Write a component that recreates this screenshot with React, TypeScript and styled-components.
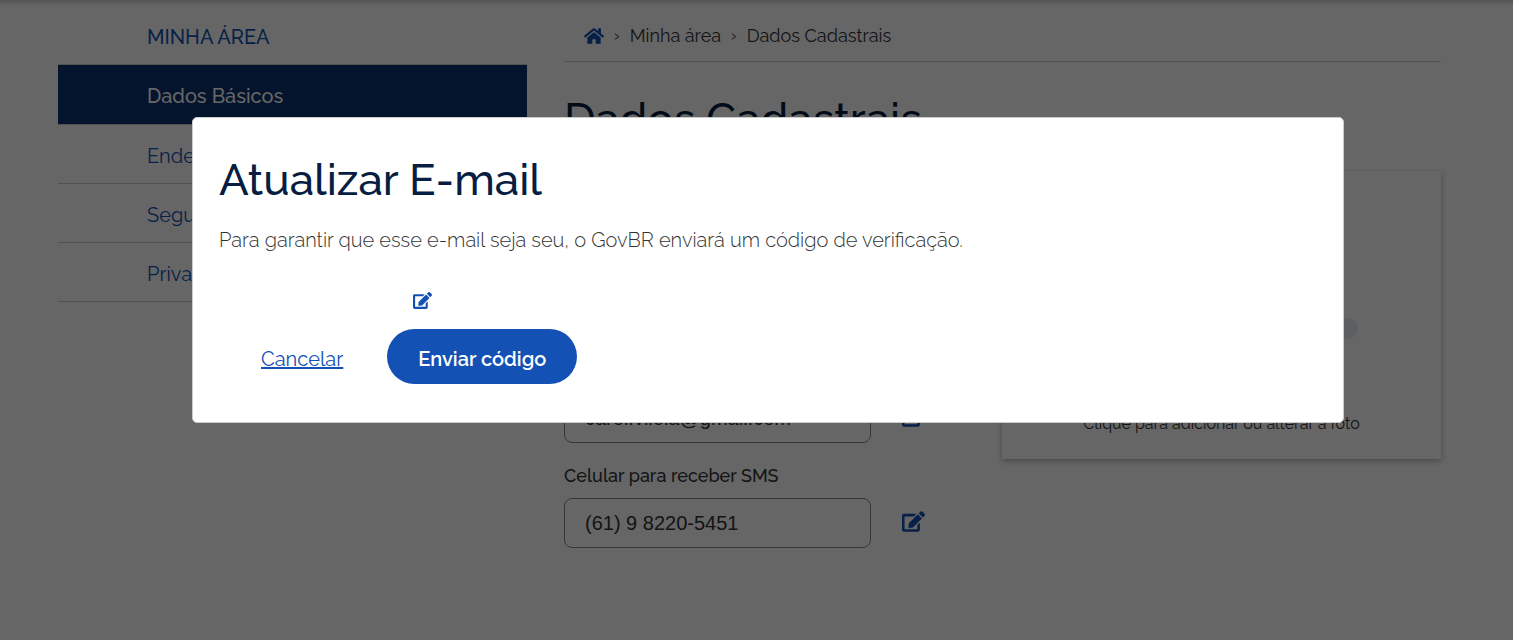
import React from 'react';
import styled, { createGlobalStyle } from 'styled-components';
import { FaEdit, FaHome } from 'react-icons/fa';

const blue = '#1351b4';
const navy = '#071d41';
const line = '#cccccc';

const GlobalStyle = createGlobalStyle`
  *, *::before, *::after { box-sizing: border-box; }
  body {
    margin: 0;
    background: #ffffff;
    color: #333333;
    font-family: Raleway, Lato, sans-serif;
    font-size: 20px;
    line-height: 24px;
  }
`;

const Page = styled.div`
  position: relative;
  min-height: 100vh;
`;

const TopShade = styled.div`
  height: 6px;
  background: linear-gradient(#d0d0d0, #ffffff);
`;

const Columns = styled.div`
  display: grid;
  grid-template-columns: 469fr 877fr;
  column-gap: 37px;
  padding: 0 72px 0 58px;
`;

const SideTitle = styled.h2`
  margin: 0;
  padding: 19px 0 15px 89px;
  color: ${blue};
  font-size: 20px;
  font-weight: 500;
  line-height: 24px;
`;

const Menu = styled.ul`
  margin: 0;
  padding: 0;
  list-style: none;
  border-top: 1px solid ${line};
`;

const MenuLink = styled.a<{ $active?: boolean }>`
  display: flex;
  align-items: center;
  height: ${(p) => (p.$active ? 60 : 59)}px;
  padding: 3px 0 0 89px;
  border-bottom: 1px solid ${line};
  background: ${(p) => (p.$active ? '#0c326f' : 'transparent')};
  color: ${(p) => (p.$active ? '#ffffff' : blue)};
  font-weight: ${(p) => (p.$active ? 500 : 400)};
  text-decoration: none;
`;

const Crumbs = styled.nav`
  display: flex;
  align-items: center;
  gap: 10px;
  height: 56px;
  padding: 4px 0 0 20px;
  border-bottom: 1px solid ${line};
  font-size: 18px;

  svg { display: block; }
`;

const CrumbLink = styled.a`
  color: ${(p) => (p['aria-label'] ? blue : '#333333')};
  text-decoration: none;
`;

const Chevron = styled.span`
  color: #777777;
  font-size: 16px;
  font-weight: 600;
`;

const PageTitle = styled.h1`
  margin: 29px 0 0;
  color: ${navy};
  font-size: 44px;
  font-weight: 500;
  line-height: 56px;
`;

const Content = styled.div`
  display: grid;
  grid-template-columns: 438fr 439fr;
  align-items: start;
  margin-top: 24px;
`;

const Form = styled.form`
  padding-top: 187px;
`;

const Field = styled.div`
  margin-bottom: 20px;
`;

const Label = styled.label`
  display: block;
  margin-bottom: 10px;
  font-size: 18px;
  font-weight: 500;
  line-height: 25px;
`;

const FieldRow = styled.div`
  display: flex;
  align-items: center;
  gap: 31px;
`;

const TextInput = styled.input`
  width: 70%;
  height: 50px;
  padding: 0 20px;
  border: 1px solid #888888;
  border-radius: 8px;
  background: transparent;
  color: #333333;
  font-family: "Liberation Sans", sans-serif;
  font-size: 20px;
`;

const IconButton = styled.button`
  display: flex;
  padding: 0 0 4px;
  border: 0;
  background: none;
  color: ${blue};
`;

const PhotoCard = styled.section`
  display: flex;
  flex-direction: column;
  align-items: center;
  height: 288px;
  padding-top: 147px;
  box-shadow: 0 2px 6px rgba(0, 0, 0, 0.3);
`;

const PhotoShape = styled.div`
  width: 62%;
  height: 21px;
  border-radius: 11px;
  background: #e9edf8;
`;

const PhotoHint = styled.p`
  margin: 73px 0 0;
  font-size: 16px;
  font-weight: 400;
`;

const Overlay = styled.div`
  position: absolute;
  inset: 0;
  padding: 117px 169px 0 192px;
  background: rgba(0, 0, 0, 0.6);
`;

const Dialog = styled.div`
  padding: 34px 26px 38px;
  border: 1px solid ${line};
  border-radius: 5px;
  background: #ffffff;
`;

const DialogTitle = styled.h2`
  margin: 0;
  color: ${navy};
  font-size: 44px;
  font-weight: 500;
  line-height: 56px;
`;

const DialogText = styled.p`
  margin: 20px 0 0;
  font-weight: 300;
`;

const DialogEdit = styled.div`
  padding: 39px 0 0 194px;
`;

const Actions = styled.div`
  display: flex;
  align-items: center;
  gap: 44px;
  margin-top: 15px;
  padding-left: 42px;
`;

const CancelButton = styled.button`
  padding: 4px 0 0;
  border: 0;
  background: none;
  color: ${blue};
  font: inherit;
  text-decoration: underline;
`;

const SendButton = styled.button`
  height: 55px;
  width: 190px;
  padding: 4px 0 0;
  border: 0;
  border-radius: 28px;
  background: ${blue};
  color: #ffffff;
  font: inherit;
  font-weight: 600;
`;

const menu = ['Dados Básicos', 'Endereço', 'Segurança', 'Privacidade'];

const fields = [
  { id: 'email', label: 'E-mail', value: 'carol.vilela@gmail.com' },
  { id: 'sms', label: 'Celular para receber SMS', value: '(61) 9 8220-5451' },
];

export default function App() {
  return (
    <Page>
      <GlobalStyle />
      <TopShade />
      <Columns>
        <aside>
          <SideTitle>MINHA ÁREA</SideTitle>
          <Menu>
            {menu.map((item, i) => (
              <li key={item}>
                <MenuLink href="#" $active={i === 0}>{item}</MenuLink>
              </li>
            ))}
          </Menu>
        </aside>
        <main>
          <Crumbs>
            <CrumbLink href="#" aria-label="Início"><FaHome size={20} /></CrumbLink>
            <Chevron>›</Chevron>
            <CrumbLink href="#">Minha área</CrumbLink>
            <Chevron>›</Chevron>
            <span>Dados Cadastrais</span>
          </Crumbs>
          <PageTitle>Dados Cadastrais</PageTitle>
          <Content>
            <Form>
              {fields.map((f) => (
                <Field key={f.id}>
                  <Label htmlFor={f.id}>{f.label}</Label>
                  <FieldRow>
                    <TextInput id={f.id} defaultValue={f.value} />
                    <IconButton type="button" aria-label={`Editar ${f.label}`}>
                      <FaEdit size={23} />
                    </IconButton>
                  </FieldRow>
                </Field>
              ))}
            </Form>
            <PhotoCard>
              <PhotoShape />
              <PhotoHint>Clique para adicionar ou alterar a foto</PhotoHint>
            </PhotoCard>
          </Content>
        </main>
      </Columns>
      <Overlay>
        <Dialog role="dialog" aria-labelledby="dialog-title">
          <DialogTitle id="dialog-title">Atualizar E-mail</DialogTitle>
          <DialogText>
            Para garantir que esse e-mail seja seu, o GovBR enviará um código de verificação.
          </DialogText>
          <DialogEdit>
            <IconButton type="button" aria-label="Editar e-mail"><FaEdit size={19} /></IconButton>
          </DialogEdit>
          <Actions>
            <CancelButton type="button">Cancelar</CancelButton>
            <SendButton type="button">Enviar código</SendButton>
          </Actions>
        </Dialog>
      </Overlay>
    </Page>
  );
}
